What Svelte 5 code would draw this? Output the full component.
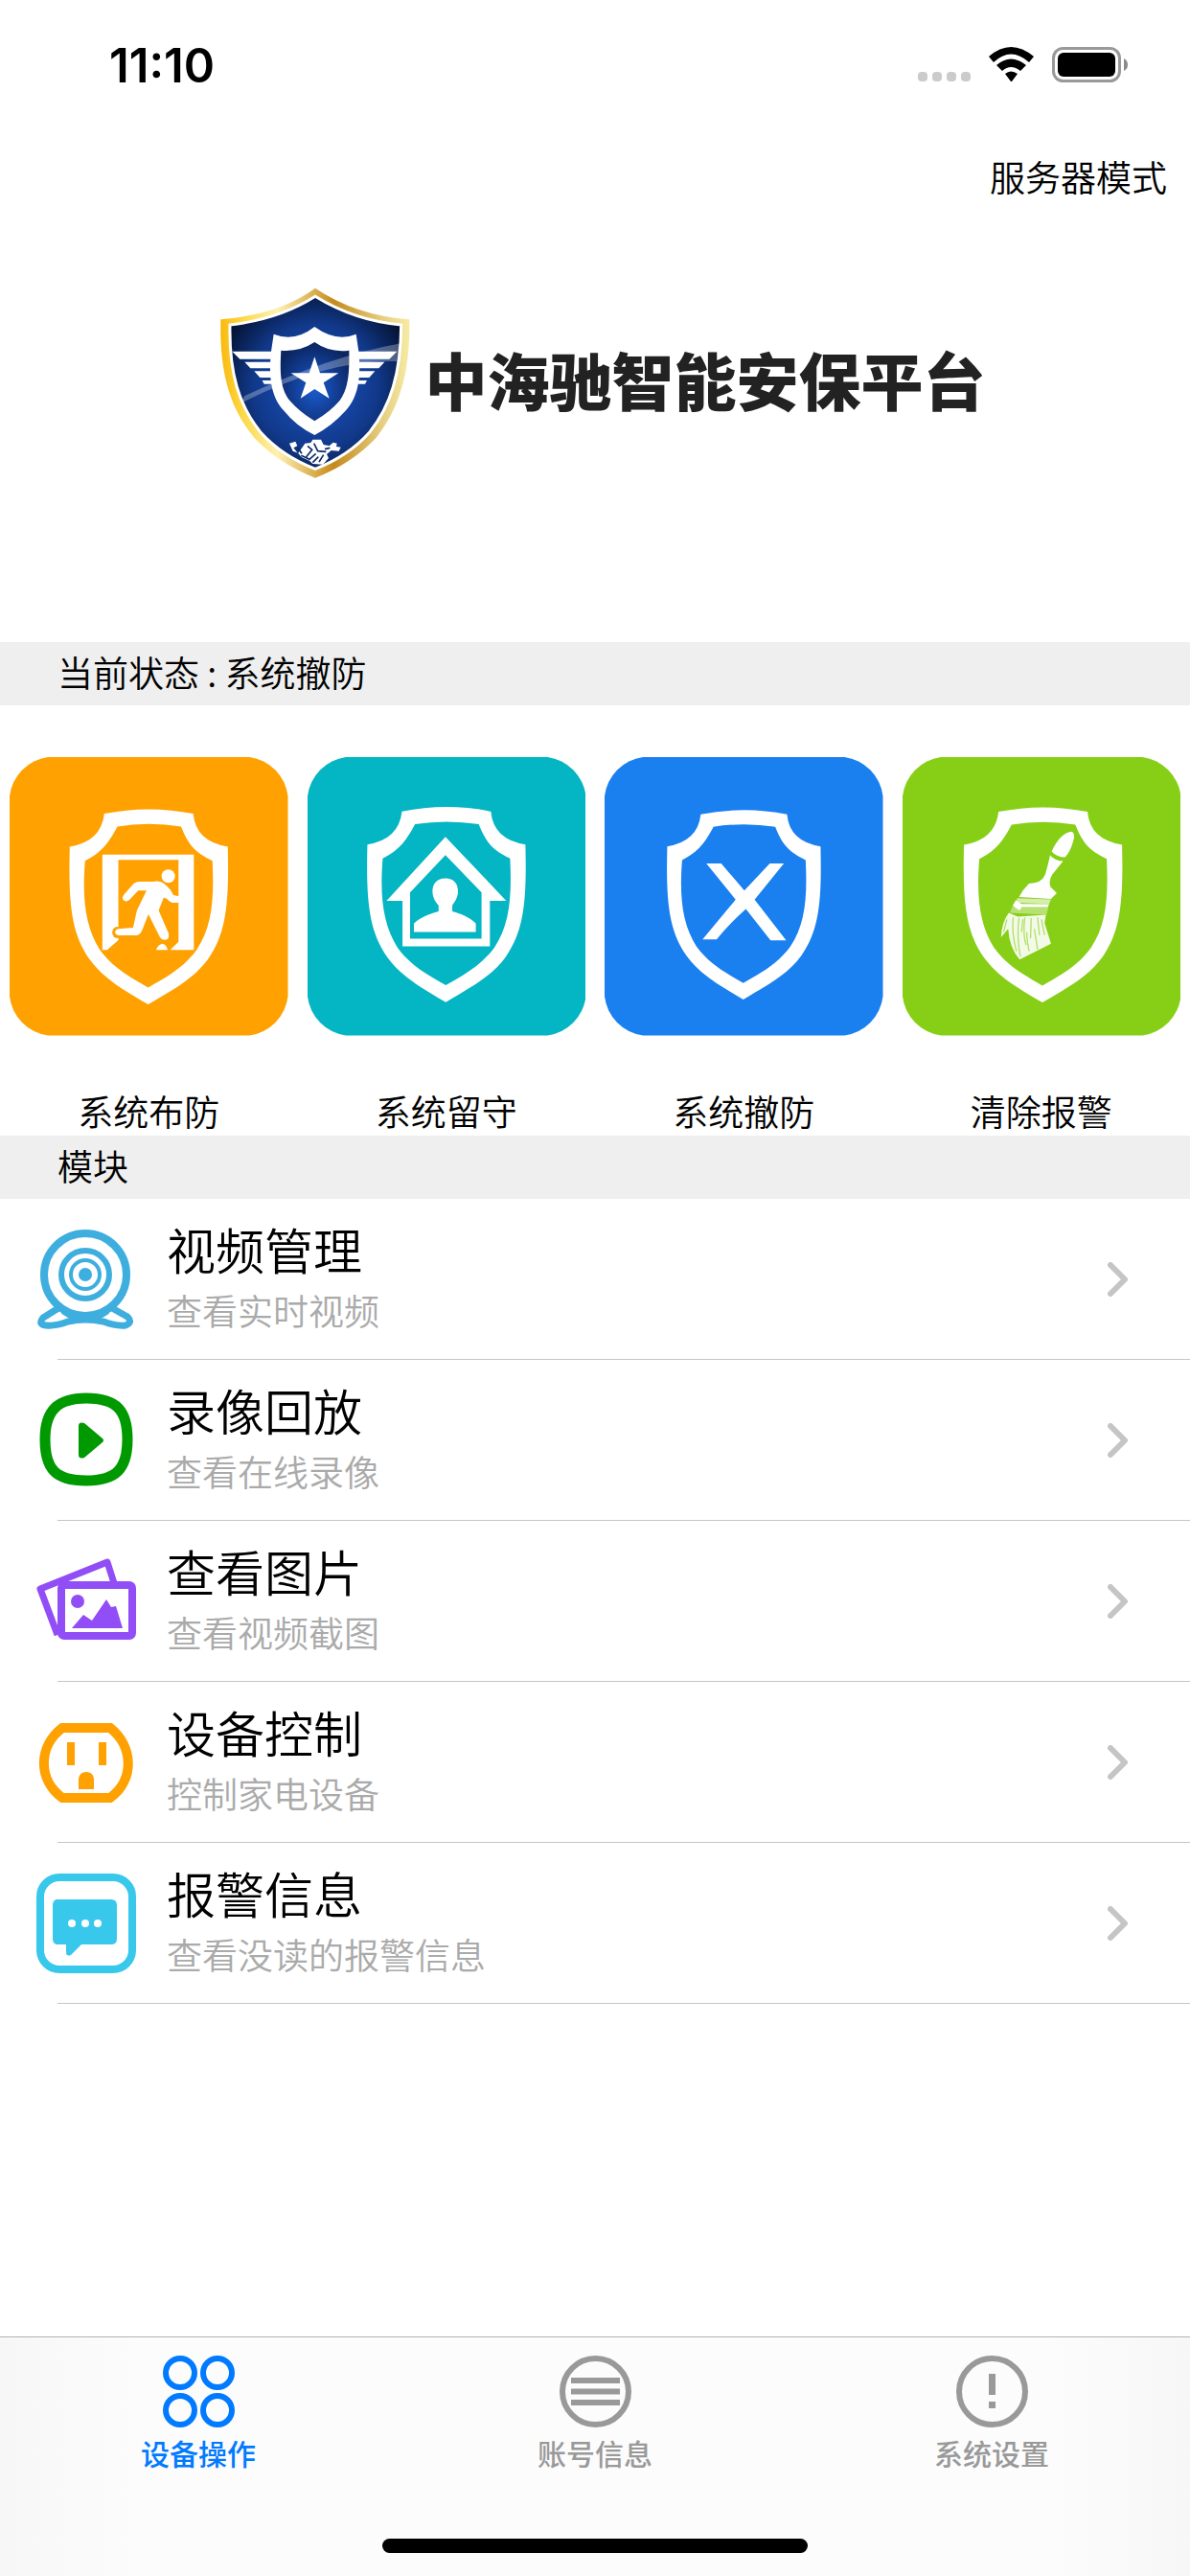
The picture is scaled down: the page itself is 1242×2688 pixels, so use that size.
<script lang="ts">
  /**
   * Home screen of the security app: brand header, arm/disarm actions,
   * module list and the bottom tab bar.
   */
  type ActionKind = "arm" | "stay" | "disarm" | "clear";
  type ModuleKind = "webcam" | "playback" | "photos" | "outlet" | "message";
  type TabKind = "devices" | "account" | "settings";

  const actions: { kind: ActionKind; label: string }[] = [
    { kind: "arm", label: "系统布防" },
    { kind: "stay", label: "系统留守" },
    { kind: "disarm", label: "系统撤防" },
    { kind: "clear", label: "清除报警" },
  ];

  const modules: { kind: ModuleKind; title: string; detail: string }[] = [
    { kind: "webcam", title: "视频管理", detail: "查看实时视频" },
    { kind: "playback", title: "录像回放", detail: "查看在线录像" },
    { kind: "photos", title: "查看图片", detail: "查看视频截图" },
    { kind: "outlet", title: "设备控制", detail: "控制家电设备" },
    { kind: "message", title: "报警信息", detail: "查看没读的报警信息" },
  ];

  const tabs: { kind: TabKind; label: string }[] = [
    { kind: "devices", label: "设备操作" },
    { kind: "account", label: "账号信息" },
    { kind: "settings", label: "系统设置" },
  ];

  let status = $state("系统撤防");
  let activeTab = $state<TabKind>("devices");

  function runAction(kind: ActionKind, label: string) {
    if (kind !== "clear") status = label;
  }
</script>

{#snippet shield()}
  <path
    fill="#fff"
    fill-rule="evenodd"
    d="M146 60Q285 32 424 60Q432 148 532 163C536 330 530 430 470 515C425 575 370 605 283 656C196 605 145 575 100 515C40 430 34 330 38 163Q136 148 146 60ZM187 100C160 150 140 180 86 207C76 330 88 415 132 485C172 540 222 568 283 603C345 568 395 540 435 485C482 415 490 330 484 207C430 180 410 160 386 100Q285 84 187 100Z"
  />
{/snippet}

{#snippet actionIcon(kind: ActionKind)}
  <svg class="tile {kind}" viewBox="-150 -117 870 870" aria-hidden="true">
    <path class="plate" d="M-30 -117H600A140 140 0 0 1 720 5V631A140 140 0 0 1 600 753H-30A140 140 0 0 1 -150 631V5A140 140 0 0 1 -30 -117Z" />
    {#if kind === "arm"}
      {@render shield()}
      <path fill="#fff" d="M140 188H426V486H352L378 460V204H190V455L155 486H140Z" />
      <ellipse class="plate" cx="186" cy="431" rx="15" ry="18" />
      <g fill="#fff">
        <circle cx="346" cy="255" r="21" />
        <path d="M238 278Q246 272 256 272H300Q322 268 340 284Q356 298 362 314L380 318V338H358Q348 334 342 326L332 322L316 362L347 434Q350 452 338 454Q326 456 320 446L284 374L266 420Q260 438 248 440H192Q180 438 180 430Q180 422 190 420L236 416L248 362L278 300H252L226 328Q214 338 206 330Q200 322 208 312Z" />
        <path d="M308 486Q314 468 328 466Q340 468 344 486Z" />
      </g>
    {:else if kind === "stay"}
      <g transform="translate(-1 -7)">{@render shield()}</g>
      <g transform="translate(-1109 -571) scale(1.188)" fill="#fff">
        <path fill-rule="evenodd" d="M1170 592L1330 760H1287V880H1057V760H1015ZM1170 640L1077 738V860H1265V738Z" />
        <path d="M1170 701C1192 701 1204 715 1203 738C1202 752 1194 764 1188 772V788C1212 794 1236 805 1250 820V842H1087V820C1102 805 1128 794 1152 788V772C1144 764 1137 752 1136 738C1135 715 1148 701 1170 701Z" />
      </g>
    {:else if kind === "disarm"}
      <g transform="translate(9 4) scale(.97)">{@render shield()}</g>
      <path
        transform="translate(-180 -571) scale(1.188)"
        fill="#fff"
        d="M293 662H332L393 733L460 662H497L420 757L503 864H462L397 782Q350 824 320 862H283L370 757Z"
      />
    {:else}
      <g transform="translate(4 -6)">{@render shield()}</g>
      <g fill="#fff">
        <path d="M380 116Q392 126 382 150Q374 178 358 196Q332 196 316 178Q344 118 380 116Z" />
        <path d="M311 190Q328 208 352 208L318 250Q306 270 312 288L332 308L314 326L214 320Q225 298 245 278Q285 278 296 250Q306 215 311 190Z" />
        <path opacity=".65" d="M208 324L314 328L308 342L206 338Z" />
        <path d="M204 330L222 342L308 343L304 352L222 352L216 362L194 348Z" />
        <path opacity=".4" d="M192 352L306 352L300 376L186 370Z" />
        <path opacity=".9" d="M182 370L210 382L298 376L294 402L314 466L216 516Q184 480 180 420L158 446Q160 400 182 370Z" />
      </g>
      <g class="gaps">
        <path d="M196 384Q190 430 206 490M214 386Q206 440 218 506M232 384Q226 440 236 470M238 430Q240 470 246 490M252 386L250 450M262 420L272 484M272 384L278 440M284 390L294 440M226 390L222 430M176 390L166 430" />
      </g>
    {/if}
  </svg>
{/snippet}

{#snippet moduleIcon(kind: ModuleKind)}
  <svg class="module-icon" viewBox="0 0 104 104" fill="none" aria-hidden="true">
    {#if kind === "webcam"}
      <g stroke="#3eaedf">
        <circle cx="51" cy="47" r="43" stroke-width="8" />
        <circle cx="51" cy="47" r="25" stroke-width="6" />
        <circle cx="51" cy="47" r="15" stroke-width="4" />
        <path stroke-width="7" stroke-linejoin="round" d="M23 82L7 92Q1 99 10 100Q20 101 33 96Q51 92 70 96Q83 101 93 100Q101 97 95 91L79 82M28 85Q51 101 74 85" />
      </g>
      <circle cx="51" cy="47" r="7" fill="#3eaedf" />
    {:else if kind === "playback"}
      <path stroke="#090" stroke-width="11" d="M52 8C84 8 95 21 95 51C95 82 83 94 52 94C20 94 9 82 9 51C9 21 22 8 52 8Z" />
      <path fill="#090" d="M44 37Q44 32 50 34L69 50Q71 52 69 54L50 70Q44 72 44 67Z" />
    {:else if kind === "photos"}
      <g stroke="#914df6" stroke-linejoin="round">
        <path stroke-width="7" d="M81 33L74 11L4 39L22 87" />
        <rect x="26" y="35" width="74" height="53" rx="3" stroke-width="8" />
      </g>
      <g fill="#914df6">
        <circle cx="43" cy="52" r="7" />
        <path d="M37 80L49 66L58 72L73 50L78 58L83 57L90 80Z" />
      </g>
    {:else if kind === "outlet"}
      <path stroke="#ffa101" stroke-width="10" d="M27 16H77C101 35 103 70 77 89H27C1 70 2 35 27 16Z" />
      <path fill="#ffa101" d="M32 31H40V55H32ZM65 31H73V55H65ZM44 80V69Q45 62 52 62Q59 62 60 69V80Z" />
    {:else}
      <rect x="4" y="4" width="96" height="96" rx="20" stroke="#37c8eb" stroke-width="8" />
      <path fill="#37c8eb" d="M21 27H78Q84 27 84 33V68Q84 74 78 74H47L36 85Q31 87 31 82V74H21Q17 73 17 68V33Q17 28 21 27Z" />
      <g fill="#fff">
        <circle cx="37" cy="52" r="4" />
        <circle cx="51" cy="52" r="4" />
        <circle cx="64" cy="52" r="4" />
      </g>
    {/if}
  </svg>
{/snippet}

{#snippet tabIcon(kind: TabKind)}
  <svg class="tab-icon" viewBox="0 0 75 75" fill="none" stroke="currentColor" stroke-width="6" aria-hidden="true">
    {#if kind === "devices"}
      <circle cx="18" cy="18" r="15" />
      <circle cx="57" cy="18" r="15" />
      <circle cx="18" cy="57" r="15" />
      <circle cx="57" cy="57" r="15" />
    {:else if kind === "account"}
      <circle cx="37.5" cy="37.5" r="34.5" />
      <path d="M12 26H63M12 37.5H63M12 49H63" />
    {:else}
      <circle cx="37.5" cy="37.5" r="34.5" />
      <path stroke-width="7" d="M37.5 19V41M37.5 48V55" />
    {/if}
  </svg>
{/snippet}

<div class="screen">
  <div class="status-bar">
    <time>11:10</time>
    <svg class="signals" viewBox="0 0 222 40" aria-hidden="true">
      <g fill="#cbcbcb">
        <rect x="0" y="27" width="10" height="10" rx="4" />
        <rect x="15" y="27" width="10" height="10" rx="4" />
        <rect x="30" y="27" width="10" height="10" rx="4" />
        <rect x="45" y="27" width="10" height="10" rx="4" />
      </g>
      <path d="M74 11Q97 -9 121 11L116 17Q97 0 79 17ZM82 20Q97 7 113 20L107 26Q97 18 88 26ZM91 29Q97 24 104 29L98 37H97Z" />
      <rect x="141.5" y="2.5" width="69" height="34" rx="10" fill="none" stroke="#999" stroke-width="3" />
      <rect x="146" y="7" width="60" height="25" rx="6" />
      <path fill="#8a8a8a" d="M215 13Q219 15 219 19.500Q219 24 215 26Z" />
    </svg>
  </div>

  <nav class="mode-bar">
    <button type="button">服务器模式</button>
  </nav>

  <header class="brand">
    <svg class="crest" viewBox="54 54 600 606" aria-hidden="true">
      <defs>
        <linearGradient id="gold" x1="0" y1="0" x2="1" y2="0">
          <stop offset="0" stop-color="#f9b90c" />
          <stop offset=".12" stop-color="#fcd949" />
          <stop offset=".3" stop-color="#fdf1b4" />
          <stop offset=".5" stop-color="#d9ad4c" />
          <stop offset=".6" stop-color="#c48a1d" />
          <stop offset=".85" stop-color="#e5cd7f" />
          <stop offset="1" stop-color="#f6eba4" />
        </linearGradient>
        <radialGradient id="navy" cx=".5" cy=".52" r=".6">
          <stop offset="0" stop-color="#1b55c4" />
          <stop offset=".6" stop-color="#11398b" />
          <stop offset="1" stop-color="#04112f" />
        </radialGradient>
        <radialGradient id="core" cx=".5" cy=".6" r=".6">
          <stop offset="0" stop-color="#1a5bd0" />
          <stop offset="1" stop-color="#0b2560" />
        </radialGradient>
      </defs>
      <path fill="url(#gold)" d="M354 62Q480 147 649 160C652 330 616 440 545 530Q470 610 354 656Q238 610 163 530C88 440 54 330 58 160Q240 145 354 62Z" />
      <path fill="url(#navy)" stroke="#fff" stroke-width="9" d="M354 88Q480 165 623 177C622 330 590 430 525 512Q460 586 354 628Q248 586 182 512C116 430 84 330 87 177Q240 160 354 88Z" />
      <g fill="#fff">
        <path d="M94 260H218V284H118ZM133 293H218V313H151ZM163 322H222V342H181ZM188 351H226V362H194Z" />
        <path d="M610 260H486V284H586ZM571 293H486V313H553ZM541 322H482V342H523ZM516 351H478V362H510Z" />
        <path d="M352 183Q420 232 482 206L490 260C498 340 490 400 450 445Q405 495 352 522Q295 495 255 445C215 400 208 340 216 260L224 206Q290 232 352 183Z" />
      </g>
      <path fill="url(#core)" d="M352 231Q400 265 460 257C462 340 455 380 430 415Q400 450 352 478Q305 450 275 415C248 380 242 340 247 257Q305 262 352 231Z" />
      <path fill="#fff" opacity=".28" d="M122 422L132 400Q400 275 622 235V292Q400 280 122 422Z" />
      <path fill="#fff" d="M352 277L369 328H427L380 358L398 407L352 378L308 407L325 358L278 328H335Z" />
      <path fill="#fff" d="M273 548L292 542L298 556L286 562L300 580L322 548L340 546L346 536L372 536L380 552L398 556L410 545L422 548L420 558L434 560L428 572L404 570L390 582L396 594L378 614L346 612L336 602L312 592L300 578L284 572Z" />
      <path fill="none" stroke="#0d2c6c" stroke-width="5" d="M298 560L312 580M330 556L344 568L326 590M350 548L362 572L388 574M364 590L346 608M380 584L366 606M400 562L384 566M310 586L336 598L356 580" />
    </svg>
    <h1>中海驰智能安保平台</h1>
  </header>

  <main>
    <h2 class="band">当前状态 : {status}</h2>
    <section class="actions">
      {#each actions as a (a.kind)}
        <button type="button" onclick={() => runAction(a.kind, a.label)}>
          {@render actionIcon(a.kind)}
          <span>{a.label}</span>
        </button>
      {/each}
    </section>

    <h2 class="band">模块</h2>
    <ul class="modules">
      {#each modules as m (m.kind)}
        <li>
          <a href="#{m.kind}">
            {@render moduleIcon(m.kind)}
            <span class="text">
              <span class="title">{m.title}</span>
              <span class="detail">{m.detail}</span>
            </span>
            <svg class="chevron" viewBox="0 0 22 36" aria-hidden="true">
              <path d="M3 3L18 18L3 33" />
            </svg>
          </a>
        </li>
      {/each}
    </ul>
  </main>

  <footer>
    <nav class="tabs">
      {#each tabs as t (t.kind)}
        <button type="button" class:active={activeTab === t.kind} onclick={() => (activeTab = t.kind)}>
          {@render tabIcon(t.kind)}
          <span>{t.label}</span>
        </button>
      {/each}
    </nav>
    <div class="home-indicator"></div>
  </footer>
</div>

<style>
  :global(body) {
    margin: 0;
    background: #fff;
  }
  .screen {
    display: flex;
    flex-direction: column;
    min-height: 100vh;
    color: #000;
    font-family: "Noto Sans CJK SC", sans-serif;
    font-size: 37px;
    font-weight: 350;
  }
  button {
    padding: 0;
    border: 0;
    background: none;
    color: inherit;
    font: inherit;
    cursor: pointer;
  }
  .status-bar {
    display: flex;
    align-items: center;
    justify-content: space-between;
    height: 136px;
    padding: 0 62px 0 114px;
  }
  time {
    font-family: Inter, sans-serif;
    font-size: 49px;
    font-weight: 600;
  }
  .signals {
    width: 222px;
    height: 40px;
  }
  .mode-bar {
    display: flex;
    align-items: center;
    justify-content: flex-end;
    height: 96px;
    padding-right: 24px;
  }
  .brand {
    display: flex;
    align-items: center;
    justify-content: center;
    gap: 14px;
    padding: 66px 16px 170px 32px;
  }
  .crest {
    width: 200px;
    height: 202px;
  }
  h1 {
    margin: 0;
    padding-bottom: 8px;
    color: #222;
    font-size: 65px;
    font-weight: 900;
    line-height: 80px;
  }
  .band {
    margin: 0;
    padding: 0 0 4px 60px;
    background: #efefef;
    font-size: 37px;
    font-weight: 350;
    line-height: 62px;
  }
  .actions {
    display: grid;
    grid-template-columns: repeat(4, 1fr);
    padding-top: 54px;
  }
  .actions button {
    display: flex;
    flex-direction: column;
    gap: 56px;
    padding: 0 10px;
    line-height: 44px;
    padding-bottom: 4px;
  }
  .tile {
    display: block;
    width: 100%;
  }
  .actions span {
    align-self: center;
  }
  .plate {
    fill: var(--plate);
  }
  .arm {
    --plate: #ffa101;
  }
  .stay {
    --plate: #04b5c3;
  }
  .disarm {
    --plate: #1a80f0;
  }
  .clear {
    --plate: #87cf17;
  }
  .gaps {
    fill: none;
    stroke: var(--plate);
    stroke-width: 4;
    opacity: 0.6;
  }
  .modules {
    margin: 0;
    padding: 0;
    list-style: none;
  }
  .modules a {
    display: flex;
    align-items: center;
    height: 168px;
    padding: 0 64px 0 38px;
    /* separator is inset from the left edge */
    background: linear-gradient(#c6c6c8, #c6c6c8) 60px 100% / 100% 1px no-repeat;
    color: inherit;
    text-decoration: none;
  }
  .module-icon {
    width: 104px;
    height: 104px;
  }
  .text {
    display: flex;
    flex: 1;
    flex-direction: column;
    margin-left: 32px;
    padding-bottom: 8px;
  }
  .title {
    font-size: 51px;
    line-height: 72px;
  }
  .detail {
    color: #aaa;
    line-height: 56px;
  }
  .chevron {
    width: 22px;
    height: 36px;
    fill: none;
    stroke: #c5c5c7;
    stroke-width: 6;
    stroke-linecap: round;
    stroke-linejoin: round;
  }
  footer {
    display: flex;
    flex-direction: column;
    align-items: center;
    justify-content: space-between;
    height: 250px;
    margin-top: auto;
    box-sizing: border-box;
    padding: 19px 0 24px;
    border-top: 1px solid #b2b2b2;
    background: linear-gradient(90deg, #f7f7f7, #fcfcfc 12%, #fcfcfc 88%, #f7f7f7);
  }
  .tabs {
    display: grid;
    grid-template-columns: repeat(3, 1fr);
    width: 100%;
  }
  .tabs button {
    display: flex;
    flex-direction: column;
    align-items: center;
    gap: 4px;
    color: #999;
    font-size: 30px;
    font-weight: 500;
    line-height: 44px;
  }
  .tabs .active {
    color: #007aff;
  }
  .tab-icon {
    width: 75px;
    height: 75px;
  }
  .home-indicator {
    width: 444px;
    height: 15px;
    border-radius: 8px;
    background: #000;
  }
</style>
